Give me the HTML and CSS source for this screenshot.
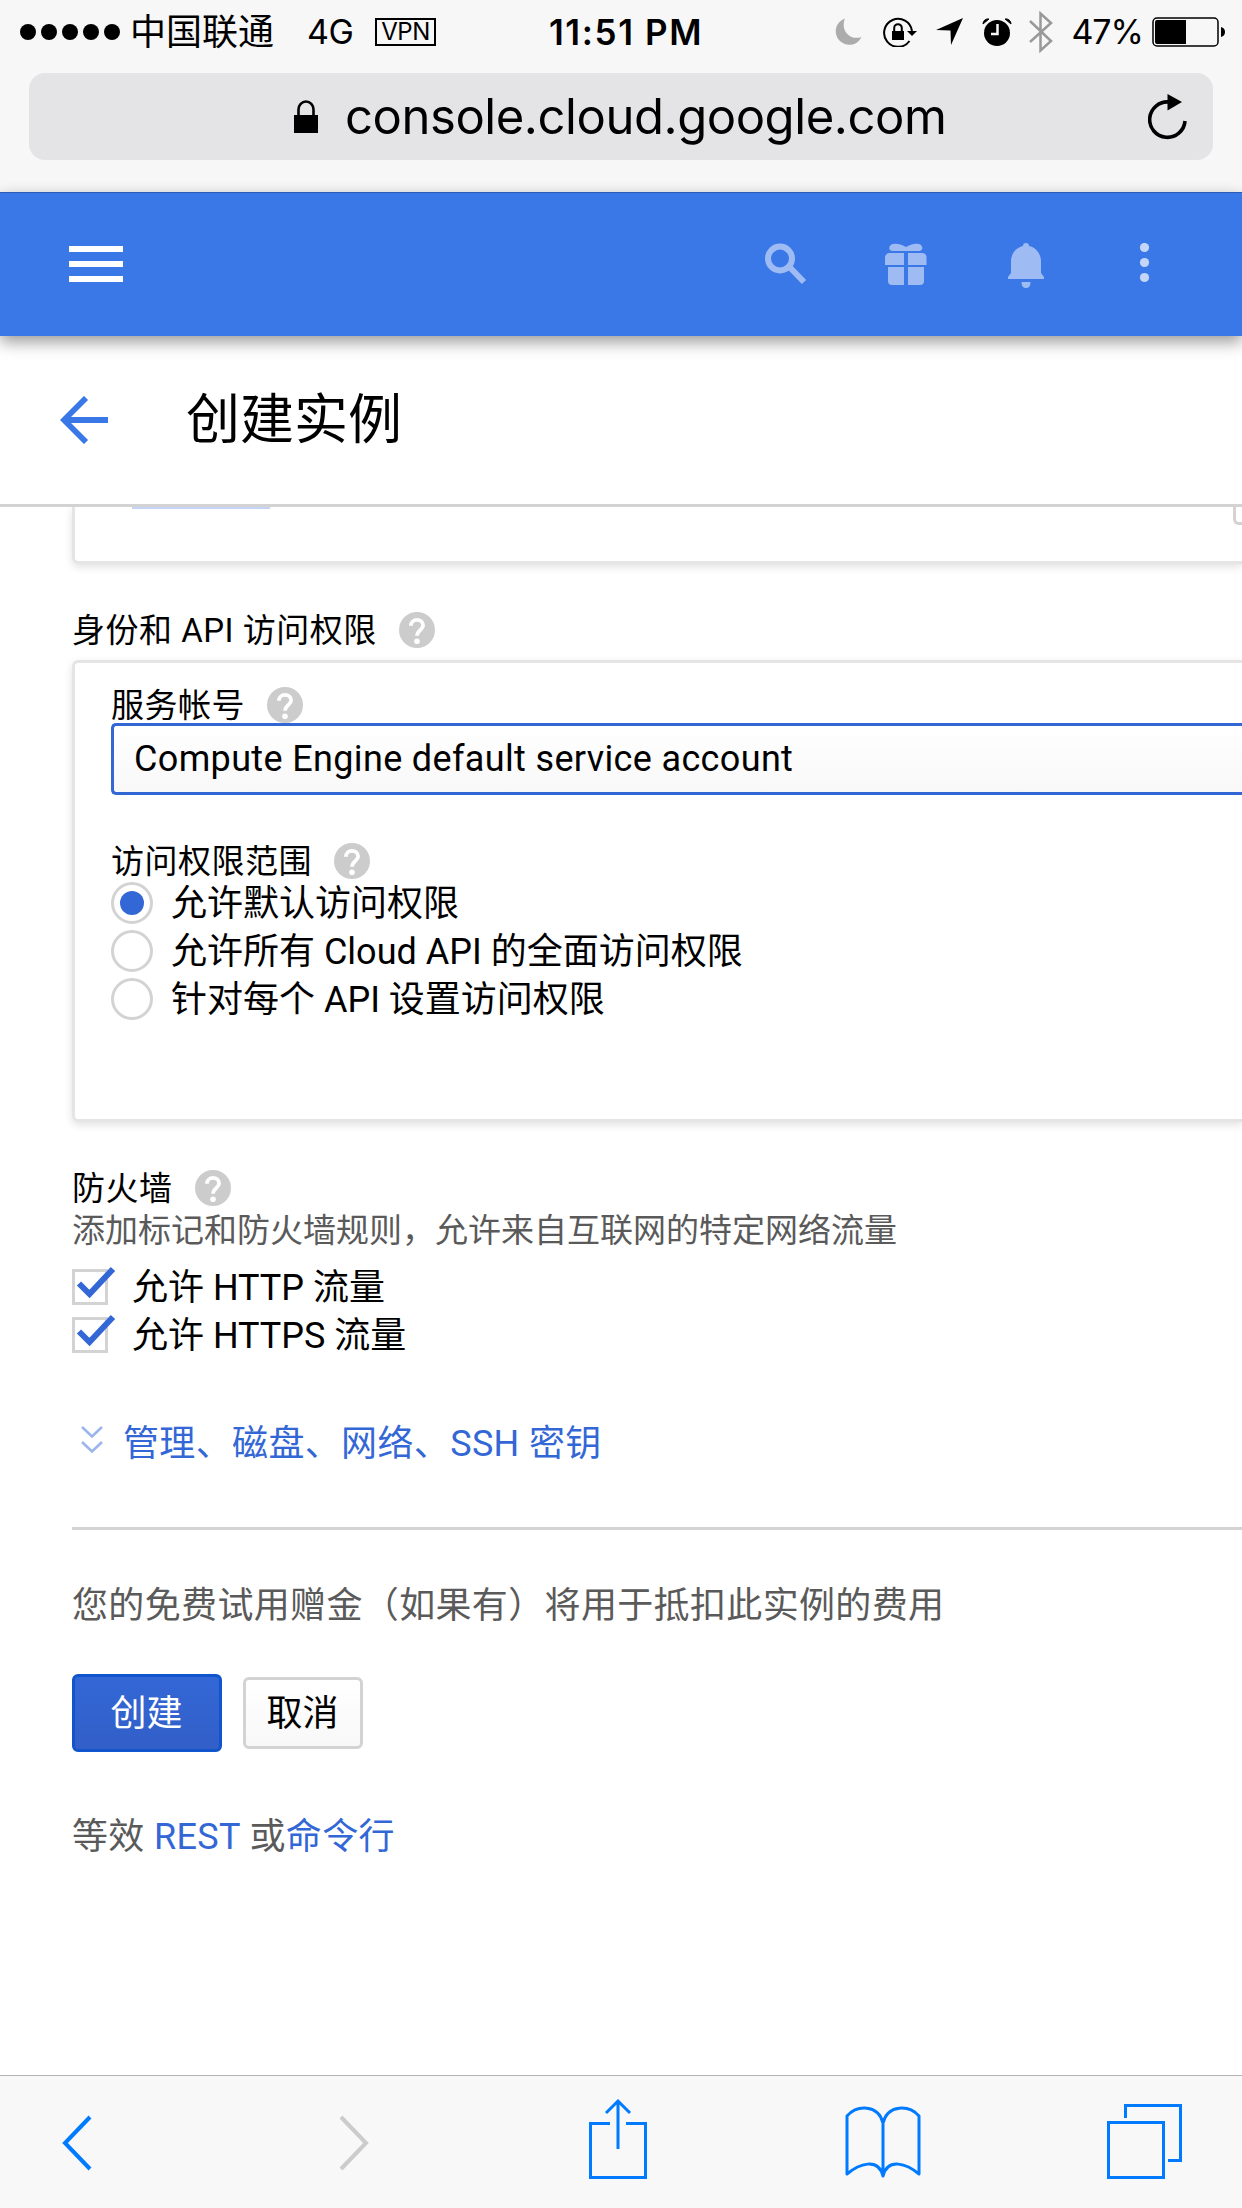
FILE: index.html
```html
<!DOCTYPE html>
<html lang="zh-CN">
<head>
<meta charset="utf-8">
<title>创建实例</title>
<link rel="stylesheet" href="styles.css">
</head>
<body>
<svg class="defs" width="0" height="0" aria-hidden="true">
  <symbol id="help" viewBox="0 0 36 36"><circle cx="18" cy="18" r="18" fill="#ccc"/><path d="M11.900 13.800c0-3.400 2.700-5.900 6.100-5.900s6.100 2.400 6.100 5.600c0 4.300-6 4.600-6 10.300" fill="none" stroke="#fff" stroke-width="3.800"/><circle cx="18" cy="29.300" r="2.800" fill="#fff"/></symbol>
  <symbol id="check" viewBox="0 0 45 45"><rect x="1.500" y="7.500" width="33" height="33" fill="#fff" stroke="#d3d3d3" stroke-width="3"/><path d="M7 20.500l10.500 10.500L41 6" fill="none" stroke="#3367d6" stroke-width="6"/></symbol>
</svg>
<div class="screen">
  <div class="chrome">
    <div class="status">
      <div class="status-left">
        <span class="signal"><i></i><i></i><i></i><i></i><i></i></span>
        <span class="carrier">中国联通</span>
        <span class="network">4G</span>
        <span class="vpn">VPN</span>
      </div>
      <span class="clock">11:51 PM</span>
      <div class="status-right">
        <svg width="28" height="30" viewBox="0 0 28 30"><path d="M11 1.500A13.500 13.500 0 1 0 27.500 20C16 24 6 13 11 1.500z" fill="#acacac"/></svg>
        <svg class="gap-a" width="34" height="30" viewBox="0 0 34 30"><path d="M26.500 24A14 14 0 1 1 29 14" fill="none" stroke="#000" stroke-width="2"/><path d="M24 14h10l-5 5z"/><path d="M9 14h12v9H9z"/><path d="M11.200 15v-4a3.800 3.800 0 0 1 7.600 0v4" fill="none" stroke="#000" stroke-width="2"/></svg>
        <svg class="gap-b" width="27" height="27" viewBox="0 0 27 27"><path d="M27 0L15 27l-.5-14.500L0 12z"/></svg>
        <svg class="gap-b" width="30" height="28" viewBox="0 0 30 28"><circle cx="15" cy="15" r="13"/><path d="M1 6a5 5 0 0 1 6-5zM29 6a5 5 0 0 0-6-5z" stroke="#000"/><path d="M15.500 6v10H9" fill="none" stroke="#f7f7f7" stroke-width="2.500"/></svg>
        <svg class="gap-c" width="24" height="42" viewBox="0 0 24 42"><path d="M1 10l21 20-10.500 9.500V2.500L22 12 1 31" fill="none" stroke="#999" stroke-width="2.500"/></svg>
        <span class="percent">47%</span>
        <svg class="gap-d" width="74" height="30" viewBox="0 0 74 30"><rect x="1" y="1" width="65" height="28" rx="4" fill="none" stroke="#000" stroke-width="1.500"/><path d="M3 5a2 2 0 0 1 2-2h29v24H5a2 2 0 0 1-2-2zM69 10q4 1 4 5t-4 5z"/></svg>
      </div>
    </div>
    <div class="address">
      <div class="address-text">
        <svg width="24" height="33" viewBox="0 0 24 33"><path d="M0 15h24v18H0z"/><path d="M4.500 16V9.500a7.500 8 0 0 1 15 0V16" fill="none" stroke="#000" stroke-width="2.600"/></svg>
        <span>console.cloud.google.com</span>
      </div>
      <svg class="reload" width="40" height="46" viewBox="0 0 40 46"><path d="M37 27A17.700 17.700 0 1 1 21 8" fill="none" stroke="#000" stroke-width="3.600"/><path d="M19.500 0L34 8l-14.500 8.500z"/></svg>
    </div>
  </div>

  <header class="appbar">
    <div class="burger"><i></i><i></i><i></i></div>
    <div class="tools">
      <svg width="42" height="46" viewBox="0 0 42 46"><circle cx="15" cy="15.500" r="12" fill="none" stroke="#9fbbf3" stroke-width="6"/><path d="M24.500 24l14.500 15" stroke="#9fbbf3" stroke-width="6"/></svg>
      <svg width="42" height="46" viewBox="0 0 42 46" fill="#9fbbf3"><path d="M8 1c5-1 9 1 13 3 4-2 8-4 13-3 5 2 4 7 0 7H8C3 8 3 2 8 1zM4.500 10H19v12H0v-8q1-4 4.500-4zM23 10h14q4 0 4.500 4v8H23zM3 24h16v18H7q-4 0-4-4zM23 24h16v14q0 4-4 4H23z"/></svg>
      <svg width="42" height="46" viewBox="0 0 42 46" fill="#9fbbf3"><path d="M18 3a3 3 0 0 1 6 0c7 1.500 12 8 12 15v12l3 4v2H3v-2l3-4V18C6 11 11 4.500 18 3zM16.500 39h9q0 6-4.500 6t-4.500-6z"/></svg>
      <svg width="42" height="46" viewBox="0 0 42 46" fill="#c4d6f8"><circle cx="19.500" cy="4.500" r="4.600"/><circle cx="19.500" cy="19.500" r="4.600"/><circle cx="19.500" cy="34.500" r="4.600"/></svg>
    </div>
  </header>

  <div class="titlebar">
    <svg width="48" height="48" viewBox="0 0 48 48"><path d="M48 24H5M26 2L4 24l22 22" fill="none" stroke="#3b78e7" stroke-width="5.800"/></svg>
    <h1>创建实例</h1>
  </div>

  <main>
    <section class="card card-cut"><span class="cut-link"></span><span class="cut-field"></span></section>

    <div class="label label-id">身份和 API 访问权限 <svg class="help"><use href="#help"/></svg></div>
    <section class="card card-id">
      <div class="label">服务帐号 <svg class="help"><use href="#help"/></svg></div>
      <div class="select">Compute Engine default service account</div>
      <div class="label label-scope">访问权限范围 <svg class="help"><use href="#help"/></svg></div>
      <div class="option"><i class="radio on"></i><span>允许默认访问权限</span></div>
      <div class="option"><i class="radio"></i><span>允许所有 Cloud API 的全面访问权限</span></div>
      <div class="option"><i class="radio"></i><span>针对每个 API 设置访问权限</span></div>
    </section>

    <div class="label label-fw">防火墙 <svg class="help"><use href="#help"/></svg></div>
    <p class="hint">添加标记和防火墙规则，允许来自互联网的特定网络流量</p>
    <div class="checks">
      <div class="check"><svg><use href="#check"/></svg><span>允许 HTTP 流量</span></div>
      <div class="check"><svg><use href="#check"/></svg><span>允许 HTTPS 流量</span></div>
    </div>
    <div class="expand">
      <svg width="22" height="28" viewBox="0 0 22 28"><path d="M1 1l10 9.500L21 1M1 16l10 9.500L21 16" fill="none" stroke="#9bb5ec" stroke-width="2.600"/></svg>
      <a>管理、磁盘、网络、SSH 密钥</a>
    </div>
    <hr>
    <p class="credit">您的免费试用赠金（如果有）将用于抵扣此实例的费用</p>
    <div class="buttons"><button class="create">创建</button><button class="cancel">取消</button></div>
    <p class="equiv">等效 <a>REST</a> 或<a>命令行</a></p>
  </main>

  <nav class="toolbar">
    <svg width="32" height="56" viewBox="0 0 32 56"><path d="M29 2L4 28l25 26" fill="none" stroke="#007aff" stroke-width="4"/></svg>
    <svg class="forward" width="32" height="56" viewBox="0 0 32 56"><path d="M3 2l25 26L3 54" fill="none" stroke="#ccc" stroke-width="4"/></svg>
    <svg class="share" width="58" height="82" viewBox="0 0 58 82"><path d="M21 25.500H1.500v54h55v-54H37M29 51V3M17 15L29 3l12 12" fill="none" stroke="#007aff" stroke-width="3"/></svg>
    <svg class="book" width="76" height="74" viewBox="0 0 76 74"><path d="M38 18v52M38 17C33-2 12-1 2 10v58C14 58 33 51 38 70 43 51 62 58 74 68V10C64-1 43-2 38 17z" fill="none" stroke="#007aff" stroke-width="3" stroke-linejoin="round"/></svg>
    <svg class="tabs" width="76" height="76" viewBox="0 0 76 76"><path d="M1.500 18.500h55v55h-55zM18.500 14V1.500h55v55H61" fill="none" stroke="#007aff" stroke-width="3"/></svg>
  </nav>
</div>
</body>
</html>
```
FILE: styles.css
```css
* { box-sizing: border-box; }
body { margin: 0; background: #fff; color: #000; font-family: Roboto, "Noto Sans CJK SC", sans-serif; font-size: 36px; }
svg { display: block; flex: none; }
h1, p { margin: 0; font-weight: 400; }
.defs { position: absolute; }
.screen { width: 1242px; height: 2208px; overflow: hidden; display: flex; flex-direction: column; }

.chrome { flex: none; height: 192px; background: #f7f7f7; font-family: Inter, "Noto Sans CJK SC", sans-serif; }
.status { height: 60px; display: grid; grid-template-columns: 1fr auto 1fr; align-items: center; padding: 3px 16px 0 20px; white-space: nowrap; line-height: 40px; }
.status-left, .status-right { display: flex; align-items: center; }
.status-right { justify-content: flex-end; }
.signal { display: flex; gap: 5px; margin-right: 10px; }
.signal i { width: 16px; height: 16px; border-radius: 50%; background: #000; }
.carrier { font-size: 36px; width: 177px; }
.network { font-size: 34px; width: 68px; letter-spacing: -0.500px; }
.vpn { width: 61px; height: 28px; border: 2px solid #000; font-size: 24px; line-height: 24px; text-align: center; letter-spacing: -0.500px; }
.clock { font-size: 35px; font-weight: 600; letter-spacing: 1.600px; margin-left: 6px; }
.gap-a { margin-left: 21px; }
.gap-b { margin-left: 19px; }
.gap-c { margin-left: 17px; }
.percent { font-size: 34px; letter-spacing: -1px; margin-left: 18px; }
.gap-d { margin-left: 9px; }
.address { margin: 13px 29px 0; height: 87px; border-radius: 16px; background: #e4e4e6; display: flex; align-items: center; padding: 0 25px 0 265px; justify-content: space-between; }
.address-text { display: flex; align-items: center; gap: 27px; font-size: 49px; line-height: 60px; letter-spacing: -0.450px; white-space: nowrap; }

.appbar { flex: none; position: relative; z-index: 2; height: 144px; background: #3b78e7; border-top: 1px solid #2c5cb5; box-shadow: 0 6px 15px rgba(0,0,0,.4); display: flex; justify-content: space-between; padding: 50px 78px 0 69px; }
.burger { display: flex; flex-direction: column; gap: 9px; padding-top: 3px; }
.burger i { width: 54px; height: 6px; background: #fff; }
.tools { display: flex; gap: 78px; margin-right: -3px; }

.titlebar { flex: none; height: 171px; border-bottom: 3px solid #d3d3d3; display: flex; align-items: center; gap: 78px; padding: 0 60px; }
.titlebar h1 { font-size: 54px; line-height: 80px; padding-top: 2px; }

main { flex: 1; min-height: 0; padding-left: 72px; overflow: hidden; display: flex; flex-direction: column; }
.card { flex: none; border: 3px solid #e5e5e5; border-right: 0; border-radius: 6px 0 0 6px; box-shadow: 0 3px 9px rgba(0,0,0,.12); }
.card-cut { height: 57px; border-top: 0; border-top-left-radius: 0; display: flex; justify-content: space-between; padding-left: 57px; }
.cut-link { width: 138px; height: 2px; background: #c5d3f6; }
.cut-field { width: 9px; height: 18px; border: 3px solid #d3d3d3; border-width: 0 0 3px 3px; border-bottom-left-radius: 6px; }
.label { flex: none; display: flex; align-items: center; gap: 22px; font-size: 33px; line-height: 36px; height: 36px; padding-top: 2px; letter-spacing: 0.500px; white-space: nowrap; }
.help { width: 36px; height: 36px; margin-top: -2px; }
.label-id { margin: 48px 0 12px; }
.card-id { height: 462px; padding: 24px 0 0 36px; }
.select { height: 72px; border: 3px solid #3367d6; border-right: 0; border-radius: 5px 0 0 5px; padding-left: 20px; line-height: 67px; background: linear-gradient(#fff, #f8f8f8); letter-spacing: 0.350px; white-space: nowrap; }
.label-scope { margin-top: 48px; margin-bottom: 3px; }
.option { height: 42px; margin-bottom: 6px; display: flex; align-items: center; gap: 18px; line-height: 42px; white-space: nowrap; }
.option span { padding-top: 1px; }
.radio { width: 42px; height: 42px; border: 3px solid #d3d3d3; border-radius: 50%; display: grid; place-items: center; }
.radio.on::after { content: ""; width: 24px; height: 24px; border-radius: 50%; background: #3367d6; }
.label-fw { margin-top: 48px; }
.hint { flex: none; height: 48px; padding-top: 1px; font-size: 33px; line-height: 48px; color: #5a5a5a; white-space: nowrap; }
.checks { flex: none; margin-top: 9px; }
.check { height: 48px; display: flex; align-items: flex-start; gap: 15px; line-height: 50px; }
.check svg { width: 45px; height: 45px; }
.expand { flex: none; display: flex; align-items: center; gap: 20px; margin-top: 54px; padding-left: 9px; height: 54px; letter-spacing: 0.350px; }
a { color: #3367d6; }
hr { flex: none; width: 100%; height: 3px; border: 0; margin: 60px 0 0; background: #d3d3d3; }
.credit { flex: none; margin-top: 51px; line-height: 50px; color: #5a5a5a; letter-spacing: 0.350px; white-space: nowrap; }
.buttons { flex: none; display: flex; align-items: center; gap: 21px; margin-top: 43px; }
button { font: inherit; padding: 0 1px 6px 0; }
.create { width: 150px; height: 78px; border: 3px solid #1155cc; border-radius: 6px; background: linear-gradient(#3367d6, #325fc8); color: #fff; }
.cancel { width: 120px; height: 72px; border: 3px solid #d3d3d3; border-radius: 6px; background: linear-gradient(#fff, #f8f8f8); color: #000; }
.equiv { flex: none; margin-top: 60px; line-height: 50px; color: #5a5a5a; letter-spacing: 0.350px; }

.toolbar { flex: none; height: 133px; border-top: 1px solid #b2b2b2; background: #f8f8f8; display: flex; align-items: center; padding: 2px 0 0 61px; }
.forward { margin-left: 245px; }
.share { margin-left: 219px; margin-bottom: 8px; }
.book { margin-left: 198px; }
.tabs { margin-left: 186px; margin-bottom: 2px; }
```
